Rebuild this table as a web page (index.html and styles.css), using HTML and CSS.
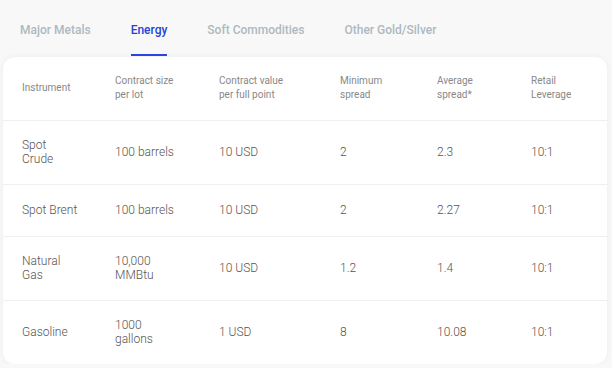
FILE: index.html
```html
<!DOCTYPE html>
<html lang="en">

<head>
    <meta charset="UTF-8">
    <meta name="viewport" content="width=device-width, initial-scale=1.0">
    <title>Energy</title>
    <link rel="stylesheet" href="styles.css">
</head>

<body>
    <nav class="tabs">
        <span class="tab">Major Metals</span>
        <span class="tab active">Energy</span>
        <span class="tab">Soft Commodities</span>
        <span class="tab">Other Gold/Silver</span>
    </nav>

    <div class="card">
        <div class="row head">
            <div>Instrument</div>
            <div>Contract size<br>per lot</div>
            <div>Contract value<br>per full point</div>
            <div>Minimum<br>spread</div>
            <div>Average<br>spread*</div>
            <div>Retail<br>Leverage</div>
        </div>
        <div class="row">
            <div>Spot<br>Crude</div>
            <div>100 barrels</div>
            <div>10 USD</div>
            <div>2</div>
            <div>2.3</div>
            <div>10:1</div>
        </div>
        <div class="row">
            <div>Spot Brent</div>
            <div>100 barrels</div>
            <div>10 USD</div>
            <div>2</div>
            <div>2.27</div>
            <div>10:1</div>
        </div>
        <div class="row">
            <div>Natural<br>Gas</div>
            <div>10,000<br>MMBtu</div>
            <div>10 USD</div>
            <div>1.2</div>
            <div>1.4</div>
            <div>10:1</div>
        </div>
        <div class="row">
            <div>Gasoline</div>
            <div>1000<br>gallons</div>
            <div>1 USD</div>
            <div>8</div>
            <div>10.08</div>
            <div>10:1</div>
        </div>
    </div>
</body>

</html>
```

FILE: styles.css
```css
body {
    margin: 0;
    font-family: Roboto, "Noto Sans", sans-serif;
    background: #f8f8f8;
}

.tabs {
    display: flex;
    gap: 40px;
    padding-left: 20px;
    margin-bottom: 1px;
}

.tab {
    font-size: 12px;
    font-weight: 500;
    line-height: 16px;
    color: #aeb8c0;
    padding: 22px 0 16px;
    border-bottom: 2px solid transparent;
}

.tab.active {
    color: #2343d6;
    border-bottom-color: #2e44e0;
}

.card {
    margin: 0 5px 0 3px;
    background: #fff;
    border-radius: 12px;
    box-shadow: 0 0 6px rgba(0, 0, 0, 0.05);
}

.row {
    display: grid;
    grid-template-columns: 93px 104px 121px 97px 94px 1fr;
    align-items: center;
    box-sizing: border-box;
    min-height: 52px;
    padding: 17px 0 18px 19px;
    border-bottom: 1px solid #efefef;
    font-size: 12px;
    font-weight: 300;
    line-height: 14px;
    color: #555;
}

.row:last-child {
    border-bottom: none;
}

.row.head {
    font-size: 10px;
    font-weight: 400;
    color: #888;
}
```
